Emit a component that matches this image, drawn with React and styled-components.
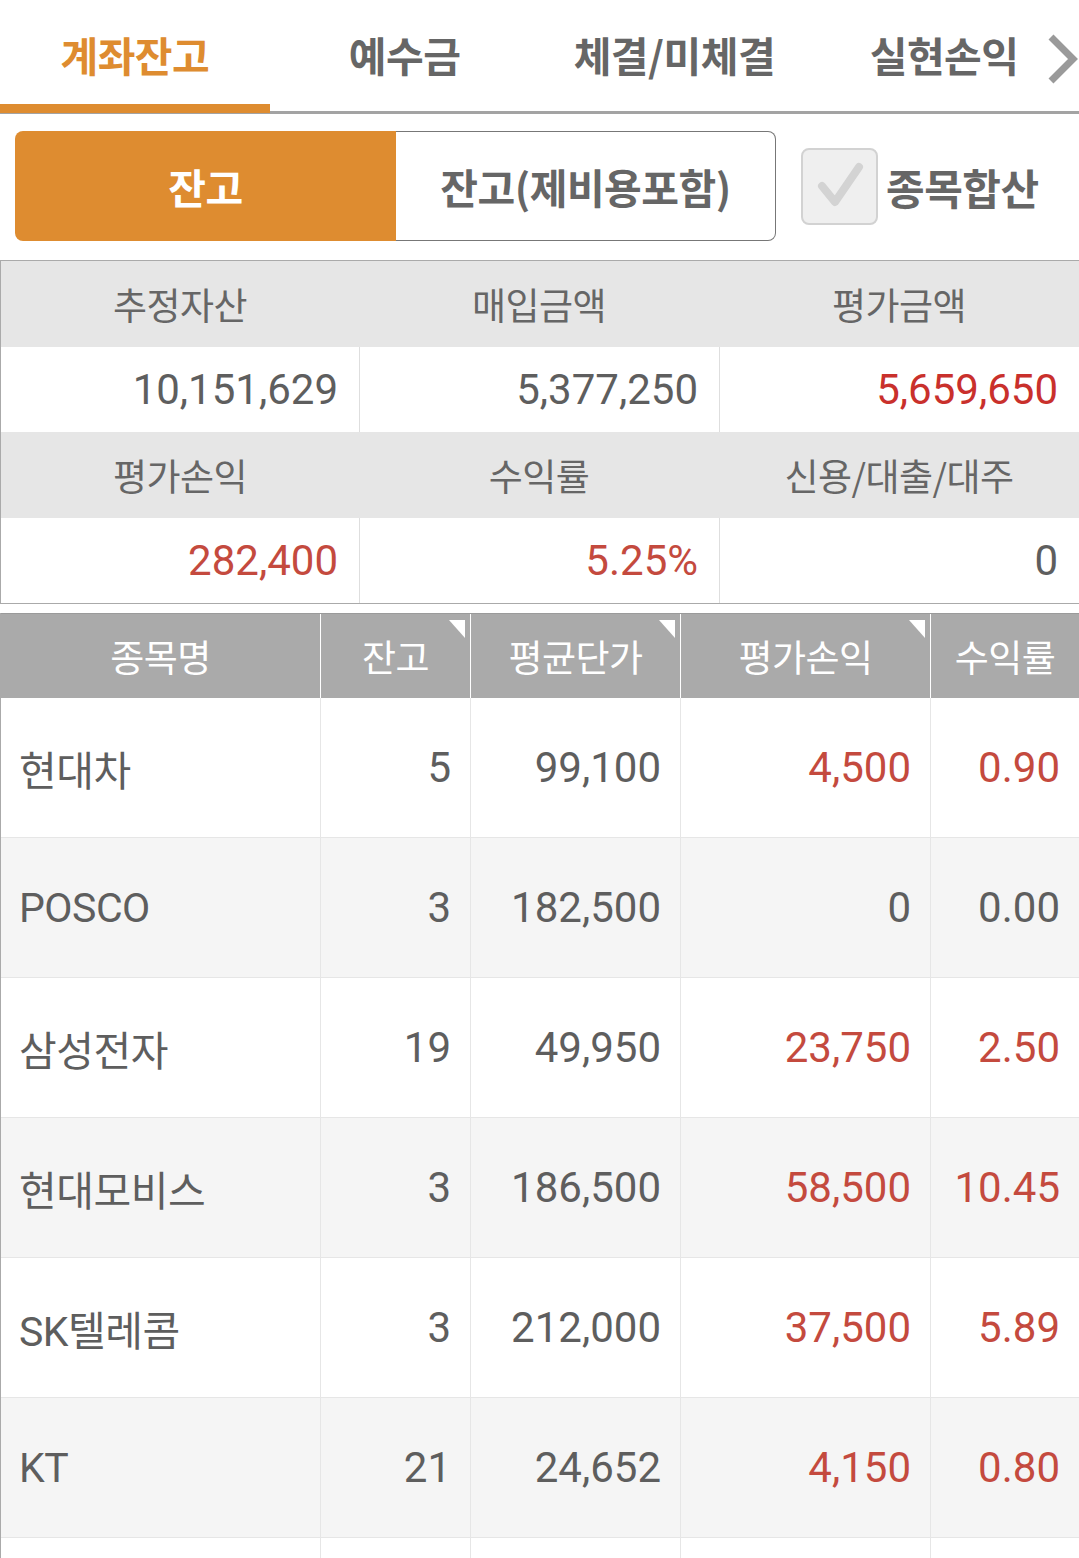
import React from 'react';
import styled, { createGlobalStyle, css } from 'styled-components';

const GlobalStyle = createGlobalStyle`
  html, body { margin: 0; padding: 0; background: #fff; }
  body { font-family: Roboto, "Noto Sans CJK KR", sans-serif; }
  * { box-sizing: border-box; }
`;

const ORANGE = '#de8c30';
const TEXT = '#5e5e5e';
const RED = '#c44a3e';
const RED_STRONG = '#c9302c';

const Page = styled.div`
  width: 1079px;
  overflow: hidden;
`;

const TabBar = styled.nav`
  position: relative;
  display: grid;
  grid-template-columns: repeat(4, 1fr);
  height: 114px;
  border-bottom: 3px solid #a3a3a3;
`;

const Tab = styled.div`
  position: relative;
  display: flex;
  align-items: center;
  justify-content: center;
  padding-bottom: 4px;
  font-family: "Noto Sans CJK KR", sans-serif;
  font-weight: 700;
  font-size: 41px;
  letter-spacing: -0.5px;
  color: ${p => (p.$active ? ORANGE : '#666')};
  ${p =>
    p.$active &&
    css`
      &::after {
        content: '';
        position: absolute;
        left: 0;
        right: 0;
        bottom: -2px;
        height: 9px;
        background: ${ORANGE};
      }
    `}
`;

const MoreArrow = styled.svg`
  position: absolute;
  right: 1px;
  top: 34px;
  width: 32px;
  height: 50px;
`;

const Controls = styled.div`
  display: flex;
  align-items: center;
  padding: 17px 0 0 15px;
`;

const Segmented = styled.div`
  display: flex;
  height: 110px;
`;

const SegButton = styled.div`
  display: flex;
  align-items: center;
  justify-content: center;
  width: ${p => p.$w}px;
  font-family: "Noto Sans CJK KR", sans-serif;
  font-weight: 700;
  font-size: 41px;
  letter-spacing: -0.5px;
  ${p =>
    p.$active
      ? css`
          background: ${ORANGE};
          color: #fff;
          border-radius: 8px 0 0 8px;
        `
      : css`
          background: #fff;
          color: #666;
          border: 1px solid #777;
          border-left: none;
          border-radius: 0 8px 8px 0;
        `}
`;

const CheckLabel = styled.label`
  display: flex;
  align-items: center;
  gap: 8px;
  margin-left: 25px;
  font-family: "Noto Sans CJK KR", sans-serif;
  font-weight: 700;
  font-size: 42px;
  letter-spacing: -0.5px;
  color: #666;
`;

const CheckBox = styled.span`
  display: flex;
  width: 77px;
  height: 77px;
  border: 2px solid #d2d2d2;
  border-radius: 8px;
  background: #efefef;
`;

const Summary = styled.div`
  margin-top: 19px;
  display: grid;
  grid-template-columns: 358px 360px 1fr;
  border: 1px solid #aaa;
  border-right: none;
`;

const SumLabel = styled.div`
  height: 86px;
  display: flex;
  align-items: center;
  justify-content: center;
  background: #e6e6e6;
  color: #666;
  font-family: "Noto Sans CJK KR", sans-serif;
  font-size: 37px;
  letter-spacing: -0.5px;
`;

const SumValue = styled.div`
  height: 85px;
  display: flex;
  align-items: center;
  justify-content: flex-end;
  padding-right: 21px;
  background: #fff;
  font-family: Roboto, "Noto Sans CJK KR", sans-serif;
  font-size: 42px;
  color: ${p => p.$color || TEXT};
  border-left: ${p => (p.$first ? 'none' : '1px solid #dedede')};
`;

const Holdings = styled.div`
  margin-top: 9px;
  border-left: 1px solid #aaa;
`;

const COLS = '319px 150px 210px 250px 1fr';

const HeadRow = styled.div`
  display: grid;
  grid-template-columns: ${COLS};
  height: 85px;
  background: #aaa;
  border-top: 1px solid #9a9a9a;
`;

const HeadCell = styled.div`
  position: relative;
  display: flex;
  align-items: center;
  justify-content: center;
  color: #fff;
  font-family: "Noto Sans CJK KR", sans-serif;
  font-size: 37px;
  letter-spacing: -0.5px;
  border-left: ${p => (p.$first ? 'none' : '1px solid #fff')};
`;

const SortMark = styled.span`
  position: absolute;
  top: 6px;
  right: 5px;
  width: 0;
  height: 0;
  border-top: 18px solid #fff;
  border-left: 16px solid transparent;
`;

const Row = styled.div`
  display: grid;
  grid-template-columns: ${COLS};
  height: 140px;
  background: ${p => (p.$alt ? '#f5f5f5' : '#fff')};
  border-bottom: 1px solid #e6e6e6;
`;

const NameCell = styled.div`
  display: flex;
  align-items: center;
  padding-left: 18px;
  color: ${TEXT};
  font-family: Roboto, "Noto Sans CJK KR", sans-serif;
  font-size: 41px;
  letter-spacing: -0.5px;
`;

const NumCell = styled.div`
  display: flex;
  align-items: center;
  justify-content: flex-end;
  padding-right: 19px;
  border-left: 1px solid #e6e6e6;
  color: ${p => (p.$red ? RED : TEXT)};
  font-family: Roboto, "Noto Sans CJK KR", sans-serif;
  font-size: 42px;
`;

const tabs = ['계좌잔고', '예수금', '체결/미체결', '실현손익'];

const rows = [
  { name: '현대차', qty: '5', avg: '99,100', pl: '4,500', rate: '0.90', red: true },
  { name: 'POSCO', qty: '3', avg: '182,500', pl: '0', rate: '0.00', red: false },
  { name: '삼성전자', qty: '19', avg: '49,950', pl: '23,750', rate: '2.50', red: true },
  { name: '현대모비스', qty: '3', avg: '186,500', pl: '58,500', rate: '10.45', red: true },
  { name: 'SK텔레콤', qty: '3', avg: '212,000', pl: '37,500', rate: '5.89', red: true },
  { name: 'KT', qty: '21', avg: '24,652', pl: '4,150', rate: '0.80', red: true },
];

export default function App() {
  return (
    <Page>
      <GlobalStyle />
      <TabBar>
        {tabs.map((t, i) => (
          <Tab key={t} $active={i === 0}>
            {t}
          </Tab>
        ))}
        <MoreArrow viewBox="0 0 32 50">
          <polyline points="5,3 27,25 5,47" fill="none" stroke="#9a9a9a" strokeWidth="7" />
        </MoreArrow>
      </TabBar>

      <Controls>
        <Segmented>
          <SegButton $active $w={381}>잔고</SegButton>
          <SegButton $w={380}>잔고(제비용포함)</SegButton>
        </Segmented>
        <CheckLabel>
          <CheckBox>
            <svg width="73" height="73" viewBox="0 0 73 73">
              <polyline
                points="19,36 32,52 56,17"
                fill="none"
                stroke="#d3d3d3"
                strokeWidth="8"
                strokeLinecap="round"
                strokeLinejoin="round"
              />
            </svg>
          </CheckBox>
          종목합산
        </CheckLabel>
      </Controls>

      <Summary>
        <SumLabel>추정자산</SumLabel>
        <SumLabel>매입금액</SumLabel>
        <SumLabel>평가금액</SumLabel>
        <SumValue $first>10,151,629</SumValue>
        <SumValue>5,377,250</SumValue>
        <SumValue $color={RED_STRONG}>5,659,650</SumValue>
        <SumLabel>평가손익</SumLabel>
        <SumLabel>수익률</SumLabel>
        <SumLabel>신용/대출/대주</SumLabel>
        <SumValue $first $color={RED}>282,400</SumValue>
        <SumValue $color={RED}>5.25%</SumValue>
        <SumValue>0</SumValue>
      </Summary>

      <Holdings>
        <HeadRow>
          <HeadCell $first>종목명</HeadCell>
          <HeadCell>잔고<SortMark /></HeadCell>
          <HeadCell>평균단가<SortMark /></HeadCell>
          <HeadCell>평가손익<SortMark /></HeadCell>
          <HeadCell>수익률</HeadCell>
        </HeadRow>
        {rows.map((r, i) => (
          <Row key={r.name} $alt={i % 2 === 1}>
            <NameCell>{r.name}</NameCell>
            <NumCell>{r.qty}</NumCell>
            <NumCell>{r.avg}</NumCell>
            <NumCell $red={r.red}>{r.pl}</NumCell>
            <NumCell $red={r.red}>{r.rate}</NumCell>
          </Row>
        ))}
        <Row>
          <NameCell />
          <NumCell />
          <NumCell />
          <NumCell />
          <NumCell />
        </Row>
      </Holdings>
    </Page>
  );
}
